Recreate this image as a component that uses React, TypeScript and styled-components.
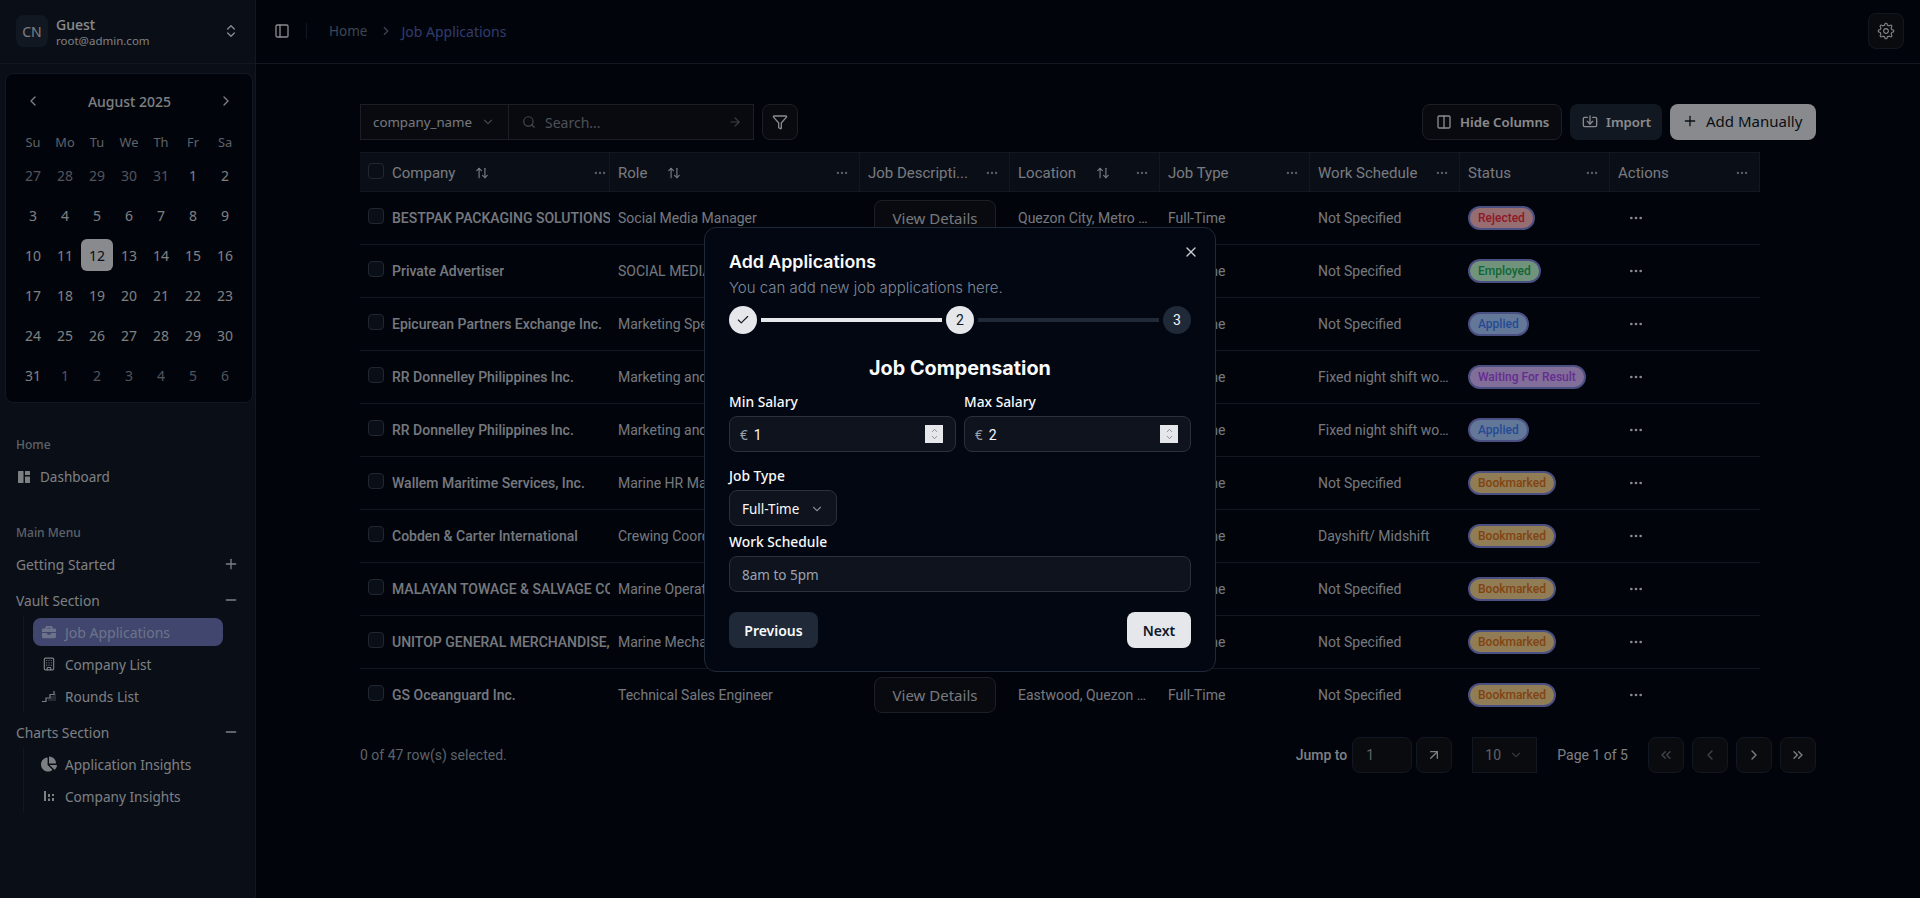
import React from "react";
import styled, { createGlobalStyle } from "styled-components";
import {
  ArrowRight,
  ArrowUpDown,
  ArrowUpRight,
  Building,
  Check,
  ChevronDown,
  ChevronLeft,
  ChevronRight,
  ChevronUp,
  ChevronsLeft,
  ChevronsRight,
  ChevronsUpDown,
  Columns2,
  Ellipsis,
  Filter,
  Import,
  Minus,
  PanelLeft,
  Plus,
  Search,
  X,
} from "lucide-react";
import { FaBriefcase, FaChartPie } from "react-icons/fa";
import { RxGear } from "react-icons/rx";

const uiFont = `"Noto Sans", "Open Sans", sans-serif`;
const tableFont = `Roboto, "Liberation Sans", sans-serif`;
const headFont = `Inter, "Noto Sans", sans-serif`;

type Status = "Rejected" | "Employed" | "Applied" | "Waiting For Result" | "Bookmarked";

const statusColors: Record<Status, { bg: string; fg: string }> = {
  Rejected: { bg: "#fab7be", fg: "#f0293c" },
  Employed: { bg: "#bdf5cf", fg: "#18ac5a" },
  Applied: { bg: "#a6c8ff", fg: "#3b7df5" },
  "Waiting For Result": { bg: "#d8b7ff", fg: "#a84cf0" },
  Bookmarked: { bg: "#f0d090", fg: "#d9701c" },
};

const rows: { company: string; role: string; location: string; schedule: string; status: Status }[] = [
  { company: "BESTPAK PACKAGING SOLUTIONS", role: "Social Media Manager", location: "Quezon City, Metro Manila", schedule: "Not Specified", status: "Rejected" },
  { company: "Private Advertiser", role: "SOCIAL MEDIA SPECIALIST", location: "Makati, Metro Manila", schedule: "Not Specified", status: "Employed" },
  { company: "Epicurean Partners Exchange Inc.", role: "Marketing Specialist", location: "Taguig, Metro Manila", schedule: "Not Specified", status: "Applied" },
  { company: "RR Donnelley Philippines Inc.", role: "Marketing and Sales", location: "Pasig, Metro Manila", schedule: "Fixed night shift work schedule", status: "Waiting For Result" },
  { company: "RR Donnelley Philippines Inc.", role: "Marketing and Sales", location: "Pasig, Metro Manila", schedule: "Fixed night shift work schedule", status: "Applied" },
  { company: "Wallem Maritime Services, Inc.", role: "Marine HR Manager", location: "Manila, Metro Manila", schedule: "Not Specified", status: "Bookmarked" },
  { company: "Cobden & Carter International", role: "Crewing Coordinator", location: "Manila, Metro Manila", schedule: "Dayshift/ Midshift", status: "Bookmarked" },
  { company: "MALAYAN TOWAGE & SALVAGE CORPORATION", role: "Marine Operations", location: "Manila, Metro Manila", schedule: "Not Specified", status: "Bookmarked" },
  { company: "UNITOP GENERAL MERCHANDISE, INC.", role: "Marine Mechanic", location: "Manila, Metro Manila", schedule: "Not Specified", status: "Bookmarked" },
  { company: "GS Oceanguard Inc.", role: "Technical Sales Engineer", location: "Eastwood, Quezon City", schedule: "Not Specified", status: "Bookmarked" },
];

const columns = [
  { label: "Company", width: 250, sort: true, tight: true },
  { label: "Role", width: 250, sort: true },
  { label: "Job Descripti...", width: 150 },
  { label: "Location", width: 150, sort: true },
  { label: "Job Type", width: 150 },
  { label: "Work Schedule", width: 150 },
  { label: "Status", width: 150 },
  { label: "Actions", width: 150 },
];

const calendarDays = [
  ["27", "28", "29", "30", "31", "1", "2"],
  ["3", "4", "5", "6", "7", "8", "9"],
  ["10", "11", "12", "13", "14", "15", "16"],
  ["17", "18", "19", "20", "21", "22", "23"],
  ["24", "25", "26", "27", "28", "29", "30"],
  ["31", "1", "2", "3", "4", "5", "6"],
];

const DashboardIcon = () => (
  <svg width="14" height="14" viewBox="0 0 14 14" fill="currentColor">
    <rect x="1" y="1" width="5.5" height="12" rx="0.5" />
    <rect x="8" y="1" width="5" height="4" rx="0.5" />
    <rect x="8" y="6.5" width="5" height="6.5" rx="0.5" />
  </svg>
);

const StairsIcon = () => (
  <svg width="16" height="14" viewBox="0 0 16 14" fill="none" stroke="currentColor" strokeWidth="1.2">
    <path d="M1 12.5h4v-3.500h4v-3.500h4V2" />
    <path d="M7 12h8V4l-3 3H9v3H7z" fill="currentColor" opacity="0.25" stroke="none" />
  </svg>
);

const BarsIcon = () => (
  <svg width="14" height="14" viewBox="0 0 14 14" fill="currentColor">
    <rect x="2" y="2" width="2" height="10" />
    <rect x="6" y="5" width="2" height="3" />
    <rect x="6" y="9.500" width="2" height="2.500" />
    <rect x="10" y="5" width="2" height="2" />
    <rect x="10" y="9" width="2" height="3" />
  </svg>
);

export default function App() {
  return (
    <>
      <GlobalStyle />
      <Page>
        <Sidebar>
          <SidebarHeader>
            <Avatar>CN</Avatar>
            <UserInfo>
              <UserName>Guest</UserName>
              <UserMail>root@admin.com</UserMail>
            </UserInfo>
            <ChevronsUpDown size={16} />
          </SidebarHeader>

          <Calendar>
            <CalendarHead>
              <ChevronLeft size={16} />
              <CalendarTitle>August 2025</CalendarTitle>
              <ChevronRight size={16} />
            </CalendarHead>
            <WeekRow>
              {["Su", "Mo", "Tu", "We", "Th", "Fr", "Sa"].map((d) => (
                <WeekDay key={d}>{d}</WeekDay>
              ))}
            </WeekRow>
            <DayGrid>
              {calendarDays.map((week, w) =>
                week.map((day, i) => {
                  const muted = (w === 0 && i < 5) || (w === 5 && i > 0);
                  return (
                    <Day key={`${w}-${i}`} $muted={muted} $selected={w === 2 && i === 2}>
                      {day}
                    </Day>
                  );
                })
              )}
            </DayGrid>
          </Calendar>

          <NavLabel $top={26}>Home</NavLabel>
          <NavLink>
            <DashboardIcon />
            Dashboard
          </NavLink>

          <NavLabel $top={24}>Main Menu</NavLabel>
          <NavSections>
            <NavSection>
              Getting Started
              <Plus size={16} />
            </NavSection>
            <NavSection>
              Vault Section
              <Minus size={16} />
            </NavSection>
            <SubList>
              <SubItem $active>
                <FaBriefcase size={14} />
                Job Applications
              </SubItem>
              <SubItem>
                <Building size={14} />
                Company List
              </SubItem>
              <SubItem>
                <StairsIcon />
                Rounds List
              </SubItem>
            </SubList>
            <NavSection>
              Charts Section
              <Minus size={16} />
            </NavSection>
            <SubList>
              <SubItem>
                <FaChartPie size={16} />
                Application Insights
              </SubItem>
              <SubItem>
                <BarsIcon />
                Company Insights
              </SubItem>
            </SubList>
          </NavSections>
        </Sidebar>

        <Main>
          <TopBar>
            <PanelLeft size={16} />
            <TopDivider />
            <Crumb>Home</Crumb>
            <ChevronRight size={14} color="#64748b" />
            <Crumb $current>Job Applications</Crumb>
            <SettingsButton>
              <RxGear size={18} />
            </SettingsButton>
          </TopBar>

          <Content>
            <Toolbar>
              <SearchGroup>
                <FieldSelect>
                  company_name
                  <ChevronDown size={14} opacity={0.5} />
                </FieldSelect>
                <SearchBox>
                  <Search size={14} opacity={0.7} />
                  <SearchHint>Search...</SearchHint>
                  <ArrowRight size={14} opacity={0.6} />
                </SearchBox>
              </SearchGroup>
              <SquareButton>
                <Filter size={16} />
              </SquareButton>
              <ToolbarRight>
                <OutlineButton>
                  <Columns2 size={16} />
                  Hide Columns
                </OutlineButton>
                <ImportButton>
                  <Import size={16} />
                  Import
                </ImportButton>
                <AddButton>
                  <Plus size={16} />
                  Add Manually
                </AddButton>
              </ToolbarRight>
            </Toolbar>

            <Table>
              <colgroup>
                {columns.map((c) => (
                  <col key={c.label} width={c.width} />
                ))}
              </colgroup>
              <thead>
                <tr>
                  {columns.map((c, i) => (
                    <Th key={c.label} $tight={c.tight}>
                      <HeadInner>
                        {i === 0 && <CheckBox />}
                        <span>{c.label}</span>
                        {c.sort && (
                          <SortIcon>
                            <ArrowUpDown size={14} />
                          </SortIcon>
                        )}
                        <HeadDots>
                          <Ellipsis size={14} />
                        </HeadDots>
                      </HeadInner>
                    </Th>
                  ))}
                </tr>
              </thead>
              <tbody>
                {rows.map((r, i) => (
                  <Row key={i} $last={i === rows.length - 1}>
                    <CompanyTd>
                      <CompanyCell>
                        <CheckBox />
                        <CompanyName>{r.company}</CompanyName>
                      </CompanyCell>
                    </CompanyTd>
                    <Td>{r.role}</Td>
                    <Td>
                      <DetailsButton>View Details</DetailsButton>
                    </Td>
                    <Td>
                      <Truncated $max={131}>{r.location}</Truncated>
                    </Td>
                    <Td>Full-Time</Td>
                    <Td>
                      <Truncated $max={134}>{r.schedule}</Truncated>
                    </Td>
                    <Td>
                      <Badge $status={r.status}>{r.status}</Badge>
                    </Td>
                    <Td>
                      <RowAction>
                        <Ellipsis size={16} />
                      </RowAction>
                    </Td>
                  </Row>
                ))}
              </tbody>
            </Table>

            <Footer>
              <SelectedText>0 of 47 row(s) selected.</SelectedText>
              <Pager>
                <JumpLabel>Jump to</JumpLabel>
                <JumpInput>1</JumpInput>
                <PageButton>
                  <ArrowUpRight size={16} />
                </PageButton>
                <SizeSelect>
                  10
                  <ChevronDown size={14} opacity={0.5} />
                </SizeSelect>
                <PageText>Page 1 of 5</PageText>
                <PageButtons>
                  <PageButton $disabled>
                    <ChevronsLeft size={16} />
                  </PageButton>
                  <PageButton $disabled>
                    <ChevronLeft size={16} />
                  </PageButton>
                  <PageButton>
                    <ChevronRight size={16} />
                  </PageButton>
                  <PageButton>
                    <ChevronsRight size={16} />
                  </PageButton>
                </PageButtons>
              </Pager>
            </Footer>
          </Content>
        </Main>
      </Page>

      <Overlay>
        <Modal>
          <CloseButton>
            <X size={16} />
          </CloseButton>
          <ModalTitle>Add Applications</ModalTitle>
          <ModalSub>You can add new job applications here.</ModalSub>

          <Stepper>
            <StepDot $done>
              <Check size={14} />
            </StepDot>
            <StepLine $done />
            <StepDot $done>2</StepDot>
            <StepLine />
            <StepDot>3</StepDot>
          </Stepper>

          <StepTitle>Job Compensation</StepTitle>

          <SalaryGrid>
            <Field>
              <FieldLabel>Min Salary</FieldLabel>
              <MoneyInput>
                <Currency>€</Currency>
                <MoneyValue>1</MoneyValue>
                <Spinner>
                  <ChevronUp size={9} />
                  <ChevronDown size={9} />
                </Spinner>
              </MoneyInput>
            </Field>
            <Field>
              <FieldLabel>Max Salary</FieldLabel>
              <MoneyInput>
                <Currency>€</Currency>
                <MoneyValue>2</MoneyValue>
                <Spinner>
                  <ChevronUp size={9} />
                  <ChevronDown size={9} />
                </Spinner>
              </MoneyInput>
            </Field>
          </SalaryGrid>

          <JobTypeLabel>Job Type</JobTypeLabel>
          <JobTypeSelect>
            Full-Time
            <ChevronDown size={14} opacity={0.5} />
          </JobTypeSelect>

          <ScheduleLabel>Work Schedule</ScheduleLabel>
          <TextInput>8am to 5pm</TextInput>

          <ModalActions>
            <PrevButton>Previous</PrevButton>
            <NextButton>Next</NextButton>
          </ModalActions>
        </Modal>
      </Overlay>
    </>
  );
}

const GlobalStyle = createGlobalStyle`
  * { box-sizing: border-box; }
  html, body { margin: 0; padding: 0; background: #030712; overflow: hidden; }
  body { font-family: ${uiFont}; color: #e5e7eb; }
`;

const Page = styled.div`
  display: flex;
  width: 100%;
  height: 100vh;
`;

const Sidebar = styled.aside`
  width: 256px;
  flex: none;
  background: #111827;
  border-right: 1px solid #1f2937;
  display: flex;
  flex-direction: column;
`;

const SidebarHeader = styled.div`
  height: 64px;
  padding: 0 16px 1px 16px;
  display: flex;
  align-items: center;
  gap: 8px;
  border-bottom: 1px solid #1f2937;
  color: #e5e7eb;
`;

const Avatar = styled.div`
  width: 32px;
  height: 32px;
  border-radius: 8px;
  background: #1f2937;
  display: flex;
  align-items: center;
  justify-content: center;
  font-size: 14px;
  color: #d1d5db;
`;

const UserInfo = styled.div`
  flex: 1;
  display: flex;
  flex-direction: column;
  line-height: 16px;
  padding-top: 3px;
`;

const UserName = styled.span`
  font-size: 14px;
  font-weight: 500;
`;

const UserMail = styled.span`
  font-size: 11.500px;
  color: #d1d5db;
`;

const Calendar = styled.div`
  margin: 9px 2px 0 5px;
  height: 330px;
  padding: 11px 11px 10px;
  background: #030712;
  border: 1px solid #1f2937;
  border-radius: 8px;
`;

const CalendarHead = styled.div`
  height: 32px;
  display: flex;
  align-items: center;
  justify-content: space-between;
  padding: 0 7px 0 8px;
  margin-bottom: 16px;
  color: #d1d5db;
`;

const CalendarTitle = styled.span`
  font-size: 14px;
  font-weight: 500;
`;

const WeekRow = styled.div`
  display: grid;
  grid-template-columns: repeat(7, 32px);
  margin-bottom: 8px;
`;

const WeekDay = styled.span`
  height: 18px;
  line-height: 18px;
  text-align: center;
  font-size: 12.8px;
  color: #9ca3af;
`;

const DayGrid = styled.div`
  display: grid;
  grid-template-columns: repeat(7, 32px);
  grid-auto-rows: 32px;
  row-gap: 8px;
`;

const Day = styled.span<{ $muted?: boolean; $selected?: boolean }>`
  display: flex;
  align-items: center;
  justify-content: center;
  font-size: 14px;
  border-radius: 6px;
  color: ${(p) => (p.$selected ? "#111827" : p.$muted ? "#858c9a" : "#d1d5db")};
  background: ${(p) => (p.$selected ? "#e5e7eb" : "transparent")};
`;

const NavLabel = styled.div<{ $top: number }>`
  margin-top: ${(p) => p.$top}px;
  height: 32px;
  line-height: 32px;
  padding-left: 16px;
  font-size: 12px;
  font-weight: 500;
  color: #9ca3af;
`;

const NavLink = styled.div`
  height: 32px;
  display: flex;
  align-items: center;
  gap: 9px;
  padding: 0 0 1px 17px;
  font-size: 13.500px;
  color: #d1d5db;
`;

const NavSections = styled.div`
  display: flex;
  flex-direction: column;
  margin-top: -1px;
`;

const NavSection = styled.div`
  height: 32px;
  flex: none;
  margin-bottom: 4px;
  display: flex;
  align-items: center;
  justify-content: space-between;
  padding: 0 16px;
  font-size: 13.800px;
  color: #d1d5db;
`;

const SubList = styled.div`
  margin: -4px 32px 4px 23px;
  padding: 2px 0 2px 9px;
  border-left: 1px solid #1f2937;
  display: flex;
  flex-direction: column;
  gap: 4px;
`;

const SubItem = styled.div<{ $active?: boolean }>`
  height: 28px;
  display: flex;
  align-items: center;
  gap: 8px;
  padding-left: 8px;
  border-radius: 8px;
  font-size: ${(p) => (p.$active ? "14px" : "13.600px")};
  white-space: nowrap;
  color: ${(p) => (p.$active ? "#b6c0e6" : "#d1d5db")};
  background: ${(p) => (p.$active ? "#6b75b7" : "transparent")};
  svg { width: 16px; flex: none; }
`;

const Main = styled.main`
  flex: 1;
  min-width: 0;
  display: flex;
  flex-direction: column;
`;

const TopBar = styled.header`
  height: 64px;
  flex: none;
  display: flex;
  align-items: center;
  padding: 0 16px 1px 18px;
  border-bottom: 1px solid #1f2937;
  color: #e5e7eb;
  gap: 8px;
`;

const TopDivider = styled.div`
  width: 1px;
  height: 16px;
  margin: 0 14px 0 8px;
  background: #1f2937;
`;

const Crumb = styled.span<{ $current?: boolean }>`
  font-size: ${(p) => (p.$current ? "14px" : "13.500px")};
  margin-right: ${(p) => (p.$current ? "0" : "4px")};
  color: ${(p) => (p.$current ? "#5364b7" : "#64748b")};
`;

const SettingsButton = styled.div`
  margin-left: auto;
  width: 36px;
  height: 36px;
  border: 1px solid #1f2937;
  background: #111318;
  border-radius: 8px;
  display: flex;
  align-items: center;
  justify-content: center;
`;

const Content = styled.div`
  padding: 40px 104px 0;
`;

const Toolbar = styled.div`
  display: flex;
  align-items: center;
  height: 36px;
  margin-bottom: 12px;
`;

const SearchGroup = styled.div`
  display: flex;
  height: 36px;
  width: 394px;
  border: 1px solid #2f3540;
  background: #0f1219;
  margin-right: 8px;
`;

const FieldSelect = styled.div`
  width: 148px;
  flex: none;
  display: flex;
  align-items: center;
  justify-content: space-between;
  padding: 0 13px 0 12px;
  border-right: 1px solid #2f3540;
  font-size: 13.300px;
  color: #c4c9d2;
`;

const SearchBox = styled.div`
  flex: 1;
  display: flex;
  align-items: center;
  gap: 8px;
  padding: 0 11px 0 13px;
  color: #9ca3af;
`;

const SearchHint = styled.span`
  flex: 1;
  font-size: 14px;
  opacity: 0.8;
  margin-left: 1px;
`;

const SquareButton = styled.div`
  width: 36px;
  height: 36px;
  border: 1px solid #2f3540;
  border-radius: 8px;
  background: #0f1219;
  display: flex;
  align-items: center;
  justify-content: center;
`;

const ToolbarRight = styled.div`
  margin-left: auto;
  display: flex;
  gap: 8px;
`;

const ToolbarButton = styled.div`
  height: 36px;
  display: flex;
  align-items: center;
  gap: 8px;
  border-radius: 8px;
  font-size: 13.200px;
  font-weight: 600;
  white-space: nowrap;
`;

const OutlineButton = styled(ToolbarButton)`
  width: 140px;
  padding-left: 13px;
  border: 1px solid #2f3540;
  background: #0f1219;
`;

const ImportButton = styled(ToolbarButton)`
  width: 92px;
  padding-left: 12px;
  background: #1f2937;
`;

const AddButton = styled(ToolbarButton)`
  width: 146px;
  padding: 0 0 2px 12px;
  gap: 8px;
  background: #e5e7eb;
  color: #111827;
  font-size: 15px;
  font-weight: 400;
`;

const Table = styled.table`
  width: 1400px;
  table-layout: fixed;
  border-collapse: separate;
  border-spacing: 0;
  font-family: ${tableFont};
`;

const Th = styled.th<{ $tight?: boolean }>`
  height: 40px;
  padding: 2px ${(p) => (p.$tight ? "2px" : "10px")} 0 8px;
  background: #111827;
  border-top: 1px solid #1f2937;
  border-bottom: 1px solid #1f2937;
  border-right: 1px solid #1f2937;
  font-size: 15px;
  font-weight: 400;
  text-align: left;
  color: #c8ccd4;
`;

const HeadInner = styled.div`
  display: flex;
  align-items: center;
  white-space: nowrap;
  overflow: hidden;
`;

const SortIcon = styled.span`
  display: flex;
  margin-left: 20px;
`;

const HeadDots = styled.span`
  display: flex;
  margin-left: auto;
  color: #9ca3af;
`;

const CheckBox = styled.span`
  width: 16px;
  height: 16px;
  flex: none;
  margin: 0 8px 5px 0;
  border: 1px solid #374151;
  border-radius: 4px;
  background: #111827;
`;

const Row = styled.tr<{ $last?: boolean }>`
  td { border-bottom: ${(p) => (p.$last ? "1px solid transparent" : "1px solid #1f2937")}; }
`;

const Td = styled.td`
  height: 53px;
  padding: 0 8px;
  font-size: 14px;
  color: #c4c9d2;
  white-space: nowrap;
  overflow: hidden;
`;

const CompanyTd = styled(Td)`
  padding-right: 0;
`;

const CompanyCell = styled.div`
  display: flex;
  align-items: center;
`;

const CompanyName = styled.span`
  font-weight: 500;
  overflow: hidden;
`;

const Truncated = styled.div<{ $max: number }>`
  overflow: hidden;
  text-overflow: ellipsis;
  max-width: ${(p) => p.$max}px;
`;

const DetailsButton = styled.div`
  width: 122px;
  height: 36px;
  margin-left: 6px;
  display: flex;
  align-items: center;
  justify-content: center;
  border: 1px solid #2f3540;
  border-radius: 8px;
  background: #0f1219;
  font-family: ${uiFont};
  font-size: 15px;
  color: #c4c9d2;
`;

const Badge = styled.span<{ $status: Status }>`
  display: inline-block;
  height: 24px;
  line-height: 20px;
  padding: 0 8px;
  border: 2px solid #7c86d8;
  border-radius: 999px;
  font-size: 12px;
  font-weight: 500;
  background: ${(p) => statusColors[p.$status].bg};
  color: ${(p) => statusColors[p.$status].fg};
`;

const RowAction = styled.div`
  display: flex;
  margin-left: 10px;
  color: #e5e7eb;
`;

const Footer = styled.div`
  margin-top: 15px;
  height: 36px;
  display: flex;
  align-items: center;
  justify-content: space-between;
  font-family: ${tableFont};
  font-size: 14px;
`;

const SelectedText = styled.span`
  color: #9ca3af;
`;

const Pager = styled.div`
  display: flex;
  align-items: center;
`;

const JumpLabel = styled.span`
  font-weight: 500;
  margin-right: 5px;
  color: #d1d5db;
`;

const JumpInput = styled.div`
  width: 60px;
  height: 36px;
  padding-left: 13px;
  margin-right: 4px;
  line-height: 34px;
  border: 1px solid #1f2937;
  border-radius: 8px;
  background: #111318;
  color: #9ca3af;
`;

const PageButton = styled.div<{ $disabled?: boolean }>`
  width: 36px;
  height: 36px;
  display: flex;
  align-items: center;
  justify-content: center;
  border: 1px solid #1f2937;
  border-radius: 8px;
  background: #111318;
  color: ${(p) => (p.$disabled ? "#6b7280" : "#d1d5db")};
`;

const SizeSelect = styled.div`
  width: 65px;
  height: 36px;
  margin: 0 20px;
  padding: 0 13px 0 12px;
  display: flex;
  align-items: center;
  justify-content: space-between;
  border: 1px solid #1f2937;
  background: #111318;
  color: #9ca3af;
`;

const PageText = styled.span`
  margin-right: 20px;
  color: #d1d5db;
`;

const PageButtons = styled.div`
  display: flex;
  gap: 8px;
`;

const Overlay = styled.div`
  position: fixed;
  inset: 0;
  padding-top: 1px;
  background: rgba(0, 0, 0, 0.4);
  display: flex;
  align-items: center;
  justify-content: center;
`;

const Modal = styled.div`
  position: relative;
  width: 512px;
  height: 445px;
  padding: 23px 24px 24px;
  background: #030712;
  border: 1px solid #1f2937;
  border-radius: 12px;
  color: #f9fafb;
`;

const CloseButton = styled.div`
  position: absolute;
  top: 16px;
  right: 16px;
  display: flex;
  color: #c9cdd4;
`;

const ModalTitle = styled.h2`
  margin: 0;
  height: 22px;
  line-height: 22px;
  font-family: ${headFont};
  font-size: 17.800px;
  font-weight: 600;
`;

const ModalSub = styled.p`
  margin: 4px 0 0;
  height: 22px;
  line-height: 22px;
  font-family: ${headFont};
  font-size: 15px;
  font-weight: 300;
  color: #7f8a9b;
`;

const Stepper = styled.div`
  margin-top: 7px;
  display: flex;
  align-items: center;
  gap: 4px;
`;

const StepDot = styled.div<{ $done?: boolean }>`
  width: 28px;
  height: 28px;
  flex: none;
  border-radius: 50%;
  display: flex;
  align-items: center;
  justify-content: center;
  font-family: ${tableFont};
  font-size: 14px;
  background: ${(p) => (p.$done ? "#e5e7eb" : "#1f2937")};
  color: ${(p) => (p.$done ? "#111827" : "#f3f4f6")};
`;

const StepLine = styled.div<{ $done?: boolean }>`
  flex: 1;
  height: 4px;
  background: ${(p) => (p.$done ? "#e5e7eb" : "#1f2937")};
`;

const StepTitle = styled.h3`
  margin: 20px 0 0;
  height: 28px;
  line-height: 28px;
  text-align: center;
  font-family: ${headFont};
  font-size: 19.800px;
  font-weight: 700;
`;

const SalaryGrid = styled.div`
  margin-top: 10px;
  display: grid;
  grid-template-columns: 1fr 1fr;
  gap: 8px;
`;

const Field = styled.div`
  display: flex;
  flex-direction: column;
`;

const FieldLabel = styled.label`
  height: 20px;
  line-height: 20px;
  margin-bottom: 4px;
  font-size: 13.800px;
  font-weight: 500;
`;

const JobTypeLabel = styled(FieldLabel)`
  display: block;
  margin-top: 14px;
`;

const ScheduleLabel = styled(FieldLabel)`
  display: block;
  margin-top: 6px;
`;

const InputBase = styled.div`
  height: 36px;
  display: flex;
  align-items: center;
  padding-top: 1px;
  border: 1px solid #2a303c;
  border-radius: 8px;
  background: #0e131e;
  font-size: 13.500px;
`;

const MoneyInput = styled(InputBase)`
  padding: 1px 12px 0 10px;
`;

const Currency = styled.span`
  color: #9ca3af;
  margin-right: 6px;
`;

const MoneyValue = styled.span`
  flex: 1;
  font-family: ${tableFont};
  font-size: 14px;
`;

const Spinner = styled.span`
  width: 18px;
  height: 18px;
  margin-top: -1px;
  display: flex;
  flex-direction: column;
  align-items: center;
  justify-content: center;
  background: #e5e7eb;
  color: #6b7280;
  svg { margin: -1px 0; }
`;

const JobTypeSelect = styled(InputBase)`
  width: 108px;
  padding: 1px 12px 0;
  justify-content: space-between;
`;

const TextInput = styled(InputBase)`
  padding-left: 12px;
  color: #9ca3af;
`;

const ModalActions = styled.div`
  margin-top: 20px;
  display: flex;
  justify-content: space-between;
`;

const ActionButton = styled.div`
  height: 36px;
  display: flex;
  align-items: center;
  justify-content: center;
  border-radius: 8px;
  font-size: 14px;
  font-weight: 600;
`;

const PrevButton = styled(ActionButton)`
  width: 89px;
  background: #1f2937;
  color: #f9fafb;
`;

const NextButton = styled(ActionButton)`
  width: 64px;
  background: #e5e7eb;
  color: #111827;
`;
